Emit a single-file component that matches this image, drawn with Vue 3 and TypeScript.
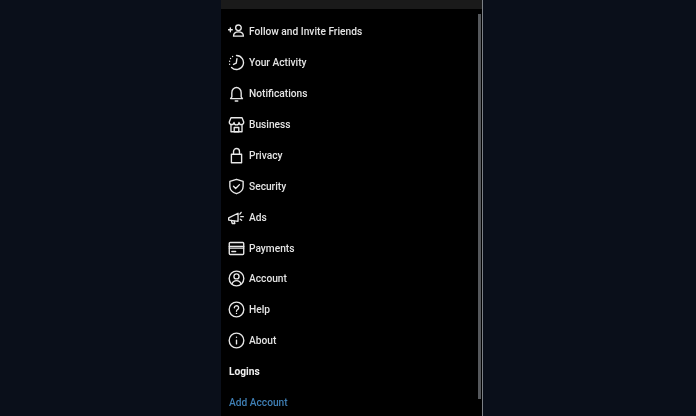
<template>
  <div class="page">
    <div class="phone">
      <div class="topbar"></div>
      <div class="body">
        <ul class="menu">
          <li v-for="item in items" :key="item.label" class="row">
            <svg class="icon" viewBox="0 0 20 20" fill="none" stroke="currentColor" stroke-width="1.6" stroke-linecap="round" stroke-linejoin="round">
              <path v-for="(d, i) in item.paths" :key="i" :d="d" />
            </svg>
            <span class="label">{{ item.label }}</span>
          </li>
          <li class="row section">Logins</li>
          <li class="row add">Add Account</li>
        </ul>
        <div class="scrollbar"></div>
      </div>
    </div>
  </div>
</template>

<script setup lang="ts">
interface MenuItem {
  label: string
  paths: string[]
}

const circle = (r: number) => `M${10 - r} 10a${r} ${r} 0 1 0 ${r * 2} 0a${r} ${r} 0 1 0 ${-r * 2} 0`

const items: MenuItem[] = [
  {
    label: 'Follow and Invite Friends',
    paths: [
      'M9 5.600a3.300 3.300 0 1 0 6.600 0a3.300 3.300 0 1 0 -6.600 0',
      'M6.500 15.500c0-3.400 2.400-5 5.800-5s5.800 1.600 5.800 5z',
      'M0.500 8h4.500M2.750 5.700v4.600',
    ],
  },
  {
    label: 'Your Activity',
    paths: [
      'M10 1.800a8.200 8.200 0 1 1 -5.800 14',
      'M10.500 5.500l-.8 5.300l-3.200 1.500',
      'M1.900 8.500v.1M1.900 12v.1M3 5.200v.1M5.400 2.900v.1',
    ],
  },
  {
    label: 'Notifications',
    paths: ['M4.500 14v-5a5.500 6 0 0 1 11 0v5l1.500 2h-14z', 'M8.500 18.800h3'],
  },
  {
    label: 'Business',
    paths: [
      'M3.500 2h13l2 5a2.800 2.800 0 0 1 -5.600 .5a2.900 2.900 0 0 1 -5.800 0a2.800 2.800 0 0 1 -5.600-.5z',
      'M3.500 10.500v8h13v-8',
      'M7.300 18.500v-5h5.400v5z',
    ],
  },
  {
    label: 'Privacy',
    paths: ['M4 8.500h12v10h-12z', 'M6.500 8.500v-3.200a3.500 3.500 0 0 1 7 0v3.200'],
  },
  {
    label: 'Security',
    paths: ['M10 1.500l7.800 2.500v6c0 4.200-3.200 7-7.800 8.500c-4.600-1.500-7.800-4.300-7.800-8.500v-6z', 'M6.500 9.800l2.500 2.500l4.500-4.500'],
  },
  {
    label: 'Ads',
    paths: [
      'M0.800 10.500l11-5.500v9.500l-11-1.500z',
      'M4 13.500l1 3.500h3l-.8-3',
      'M14 6l1.500-2M15 9h3M14.500 12l1.500 1.200',
    ],
  },
  {
    label: 'Payments',
    paths: ['M1.500 4.200c0-.7.5-1.200 1.200-1.200h14.600c.7 0 1.200 .5 1.200 1.200v11.600c0 .7-.5 1.200-1.200 1.200h-14.600c-.7 0-1.200-.5-1.200-1.200z', 'M1.500 7.500h17', 'M1.500 9.500h17', 'M4.500 13.500h4.500'],
  },
  {
    label: 'Account',
    paths: [
      circle(8.6),
      'M7 7.500a3 3 0 1 0 6 0a3 3 0 1 0 -6 0',
      'M4.800 16.300c.8-2.500 2.800-3.800 5.200-3.800s4.400 1.300 5.200 3.800',
    ],
  },
  {
    label: 'Help',
    paths: [circle(8.6), 'M7.500 8a2.500 2.400 0 1 1 3.800 2c-.9.6-1.300 1-1.300 2', 'M10 14.500v.1'],
  },
  {
    label: 'About',
    paths: [circle(8.6), 'M10 9.500v4.500', 'M10 6.200v.1'],
  },
]
</script>

<style>
html,
body {
  margin: 0;
  background: #0a0f1a;
}
</style>

<style scoped>
.page {
  width: 696px;
  height: 416px;
  overflow: hidden;
  display: flex;
  justify-content: flex-start;
  padding-left: 221px;
  box-sizing: border-box;
  background: #0a0f1a;
  font-family: Roboto, "Liberation Sans", sans-serif;
}

.phone {
  width: 262px;
  height: 416px;
  flex: none;
  display: flex;
  flex-direction: column;
  background: #000;
  border-right: 1px solid #7c8086;
  box-sizing: border-box;
}

.topbar {
  height: 9px;
  flex: none;
  background: #1a1a1a;
}

.body {
  flex: 1;
  min-height: 0;
  display: flex;
  justify-content: space-between;
  overflow: hidden;
}

.menu {
  list-style: none;
  margin: 0;
  padding: 7px 0 0 7px;
  filter: blur(0.4px);
}

.row {
  height: 30.95px;
  display: flex;
  align-items: center;
  gap: 4px;
  color: #e4e4e4;
  font-size: 10.2px;
  font-weight: 500;
}

.icon {
  width: 17px;
  height: 17px;
  flex: none;
  color: #e8e8e8;
}

.section {
  color: #f0f0f0;
  font-weight: 700;
  padding-left: 1px;
}

.add {
  color: #3f7fb5;
  padding-left: 1px;
}

.scrollbar {
  width: 3px;
  height: 385px;
  margin: 5px 1px 0 0;
  flex: none;
  background: #55585c;
}
</style>
